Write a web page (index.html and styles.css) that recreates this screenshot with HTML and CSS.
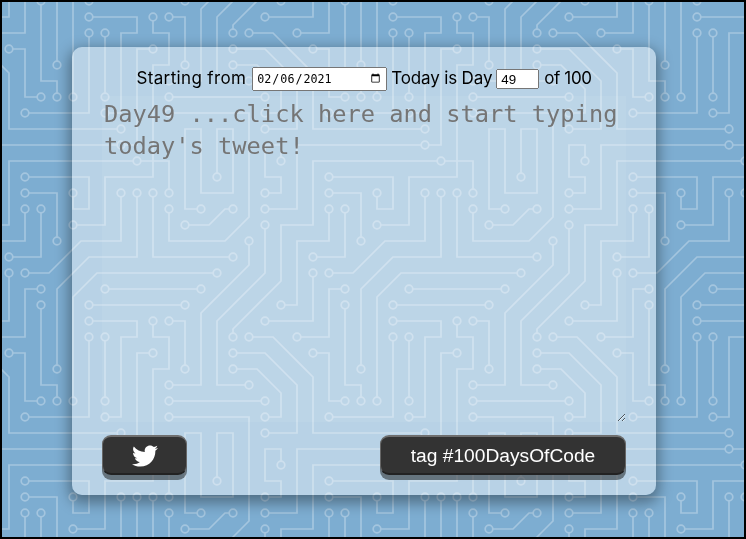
FILE: index.html
```html
<!DOCTYPE html>
<html lang="en">
<head>
  <meta charset="UTF-8">
  <meta name="viewport" content="width=device-width, initial-scale=1.0">
  <title>100DaysOfCode tweet</title>
  <link rel="stylesheet" href="styles.css">
</head>
<body>

  <!-- Circuit board background -->
  <svg class="circuit" width="746" height="539" aria-hidden="true">
    <defs>
      <g id="traces" class="traces">
        <path d="M41 309V385H57V397M137 197V257H89L57 289V365M317 353H329V401H341M213 273H97L73 297V397M341 289H329V337H301M93 321H137V337H121V417H109M89 341V417H29M105 341V397M253 337H273L313 377V433H421M421 449H297V513H269M453 353H441V449H429M437 161H313V225H281V281L233 329V333M445 161H473V189M329 213V241H297V305H285M345 213V257H317M313 277V321H269M29 177H89V209H73V197M29 193H57V237M29 273H49L81 241H121V197M109 289H197M93 305H181M153 197V257H229M153 325V337H169V369H153V481H105V529H77M173 321H185V365M249 245V265L201 313V385H173M265 229V273L217 321V385H245M237 353H265L297 385V433H269M237 369H257L281 393V417H269M173 401H261M173 417H249V521L225 545H169V517M189 529H209L225 513H229M217 477V433H233V497H201V433H185V513H197M281 461V449H265V481H281V497H269"/>
        <circle cx="41" cy="305" r="3.8"/><circle cx="57" cy="401" r="3.8"/><circle cx="137" cy="193" r="3.8"/><circle cx="57" cy="369" r="3.8"/>
        <circle cx="313" cy="353" r="3.8"/><circle cx="345" cy="401" r="3.8"/><circle cx="217" cy="273" r="3.8"/><circle cx="73" cy="401" r="3.8"/>
        <circle cx="345" cy="289" r="3.8"/><circle cx="297" cy="337" r="3.8"/><circle cx="89" cy="321" r="3.8"/><circle cx="105" cy="417" r="3.8"/>
        <circle cx="89" cy="337" r="3.8"/><circle cx="25" cy="417" r="3.8"/><circle cx="105" cy="337" r="3.8"/><circle cx="105" cy="401" r="3.8"/>
        <circle cx="249" cy="337" r="3.8"/><circle cx="425" cy="433" r="3.8"/><circle cx="425" cy="449" r="3.8"/><circle cx="265" cy="513" r="3.8"/>
        <circle cx="457" cy="353" r="3.8"/><circle cx="441" cy="161" r="3.8"/><circle cx="233" cy="337" r="3.8"/><circle cx="473" cy="193" r="3.8"/>
        <circle cx="329" cy="209" r="3.8"/><circle cx="281" cy="305" r="3.8"/><circle cx="345" cy="209" r="3.8"/><circle cx="313" cy="257" r="3.8"/>
        <circle cx="313" cy="273" r="3.8"/><circle cx="265" cy="321" r="3.8"/><circle cx="25" cy="177" r="3.8"/><circle cx="73" cy="193" r="3.8"/>
        <circle cx="25" cy="193" r="3.8"/><circle cx="57" cy="241" r="3.8"/><circle cx="25" cy="273" r="3.8"/><circle cx="121" cy="193" r="3.8"/>
        <circle cx="105" cy="289" r="3.8"/><circle cx="201" cy="289" r="3.8"/><circle cx="89" cy="305" r="3.8"/><circle cx="185" cy="305" r="3.8"/>
        <circle cx="153" cy="193" r="3.8"/><circle cx="233" cy="257" r="3.8"/><circle cx="153" cy="321" r="3.8"/><circle cx="73" cy="529" r="3.8"/>
        <circle cx="169" cy="321" r="3.8"/><circle cx="185" cy="369" r="3.8"/><circle cx="249" cy="241" r="3.8"/><circle cx="169" cy="385" r="3.8"/>
        <circle cx="265" cy="225" r="3.8"/><circle cx="249" cy="385" r="3.8"/><circle cx="233" cy="353" r="3.8"/><circle cx="265" cy="433" r="3.8"/>
        <circle cx="233" cy="369" r="3.8"/><circle cx="265" cy="417" r="3.8"/><circle cx="169" cy="401" r="3.8"/><circle cx="265" cy="401" r="3.8"/>
        <circle cx="169" cy="417" r="3.8"/><circle cx="169" cy="513" r="3.8"/><circle cx="185" cy="529" r="3.8"/><circle cx="233" cy="513" r="3.8"/>
        <circle cx="217" cy="481" r="3.8"/><circle cx="201" cy="513" r="3.8"/><circle cx="281" cy="465" r="3.8"/><circle cx="265" cy="497" r="3.8"/>
      </g>
      <pattern id="tile" width="304" height="304" patternUnits="userSpaceOnUse">
        <g class="traces-fade">
          <use href="#traces"/>
          <use href="#traces" x="-304"/>
          <use href="#traces" y="-304"/>
          <use href="#traces" x="-304" y="-304"/>
        </g>
      </pattern>
    </defs>
    <rect width="746" height="539" fill="url(#tile)"/>
  </svg>

  <div class="card">
    <div class="dates">
      <span class="lbl-start">Starting from</span>
      <input type="date" class="start-date" value="2021-02-06">
      <span class="lbl-day">Today is Day</span>
      <input type="number" class="day-no" value="49">
      <span class="lbl-of">of 100</span>
    </div>

    <textarea class="tweet" placeholder="Day49 ...click here and start typing today's tweet!"></textarea>

    <div class="actions">
      <button class="btn btn-tweet" aria-label="Tweet">
        <svg viewBox="0 0 512 512" width="26" height="26">
          <path fill="#fff" d="M459.37 151.716c.325 4.548.325 9.097.325 13.645 0 138.72-105.583 298.558-298.558 298.558-59.452 0-114.68-17.219-161.137-47.106 8.447.974 16.568 1.299 25.34 1.299 49.055 0 94.213-16.568 130.274-44.832-46.132-.975-84.792-31.188-98.112-72.772 6.498.974 12.995 1.624 19.818 1.624 9.421 0 18.843-1.3 27.614-3.573-48.081-9.747-84.143-51.98-84.143-102.985v-1.299c13.969 7.797 30.214 12.67 47.431 13.319-28.264-18.843-46.781-51.005-46.781-87.391 0-19.492 5.197-37.36 14.294-52.954 51.655 63.675 129.3 105.258 216.365 109.807-1.624-7.797-2.599-15.918-2.599-24.04 0-57.828 46.782-104.934 104.934-104.934 30.213 0 57.502 12.67 76.67 33.137 23.715-4.548 46.456-13.32 66.599-25.34-7.798 24.366-24.366 44.833-46.132 57.827 21.117-2.273 41.584-8.122 60.426-16.243-14.292 20.791-32.161 39.308-52.628 54.253z"/>
        </svg>
      </button>
      <button class="btn btn-tag">tag #100DaysOfCode</button>
    </div>
  </div>

</body>
</html>
```

FILE: styles.css
```css
html, body {
  height: 100%;
}

body {
  margin: 0;
  padding: 45px 0 0 70px;
  box-sizing: border-box;
  border: 2px solid #000;
  background-color: #7dadd1;
  font-family: "Inter", "Liberation Sans", sans-serif;
  overflow: hidden;
}

/* Background */
.circuit {
  position: fixed;
  top: 0;
  left: 0;
  z-index: -1;
}

.traces {
  fill: none;
  stroke: #fff;
  stroke-width: 1.7;
}

.traces-fade {
  opacity: 0.3;
}

/* Card */
.card {
  width: 584px;
  height: 448px;
  box-sizing: border-box;
  padding: 20px 30px 0;
  background-color: rgba(255, 255, 255, 0.46);
  border-radius: 10px;
  box-shadow: 0 5px 14px 3px rgba(0, 0, 0, 0.36);
}

.dates {
  display: flex;
  align-items: center;
  justify-content: center;
  gap: 4px;
  height: 24px;
  margin-bottom: 5px;
  font-size: 17px;
  line-height: 22px;
  color: #000;
}

.dates span {
  margin-top: -2px;
}

.lbl-start {
  letter-spacing: 0.35px;
}

.lbl-day {
  letter-spacing: -0.15px;
}

.lbl-of {
  letter-spacing: -0.4px;
  margin-left: 1px;
}

.start-date {
  width: 135px;
  height: 24px;
  margin-left: 2px;
  box-sizing: border-box;
  font-family: "DejaVu Sans Mono", monospace;
  font-size: 11.7px;
  padding: 1px 2px;
}

.day-no {
  width: 43px;
  height: 20px;
  box-sizing: border-box;
  font-family: "Liberation Sans", sans-serif;
  font-size: 13.33px;
  padding: 1px 3px;
}

.tweet {
  display: block;
  width: 524px;
  height: 326px;
  box-sizing: border-box;
  padding: 2px;
  margin: 0;
  border: none;
  outline: none;
  overflow: hidden;
  background-color: rgba(255, 255, 255, 0.06);
  font-family: "DejaVu Sans Mono", monospace;
  font-size: 23.7px;
  line-height: 32px;
}

/* Buttons */
.actions {
  display: flex;
  justify-content: space-between;
  margin-top: 13px;
}

.btn {
  height: 40px;
  box-sizing: border-box;
  display: flex;
  align-items: center;
  justify-content: center;
  padding-top: 2px;
  background-color: #333;
  color: #fff;
  border-style: solid;
  border-width: 2px 1px;
  border-color: #6f6f6f #666 #222;
  border-radius: 9px;
  box-shadow: 0 5px 0 rgba(0, 0, 0, 0.45);
  font-family: "Liberation Sans", sans-serif;
  font-size: 19.2px;
  cursor: pointer;
}

.btn-tweet {
  width: 85px;
}

.btn-tag {
  width: 246px;
}
```
